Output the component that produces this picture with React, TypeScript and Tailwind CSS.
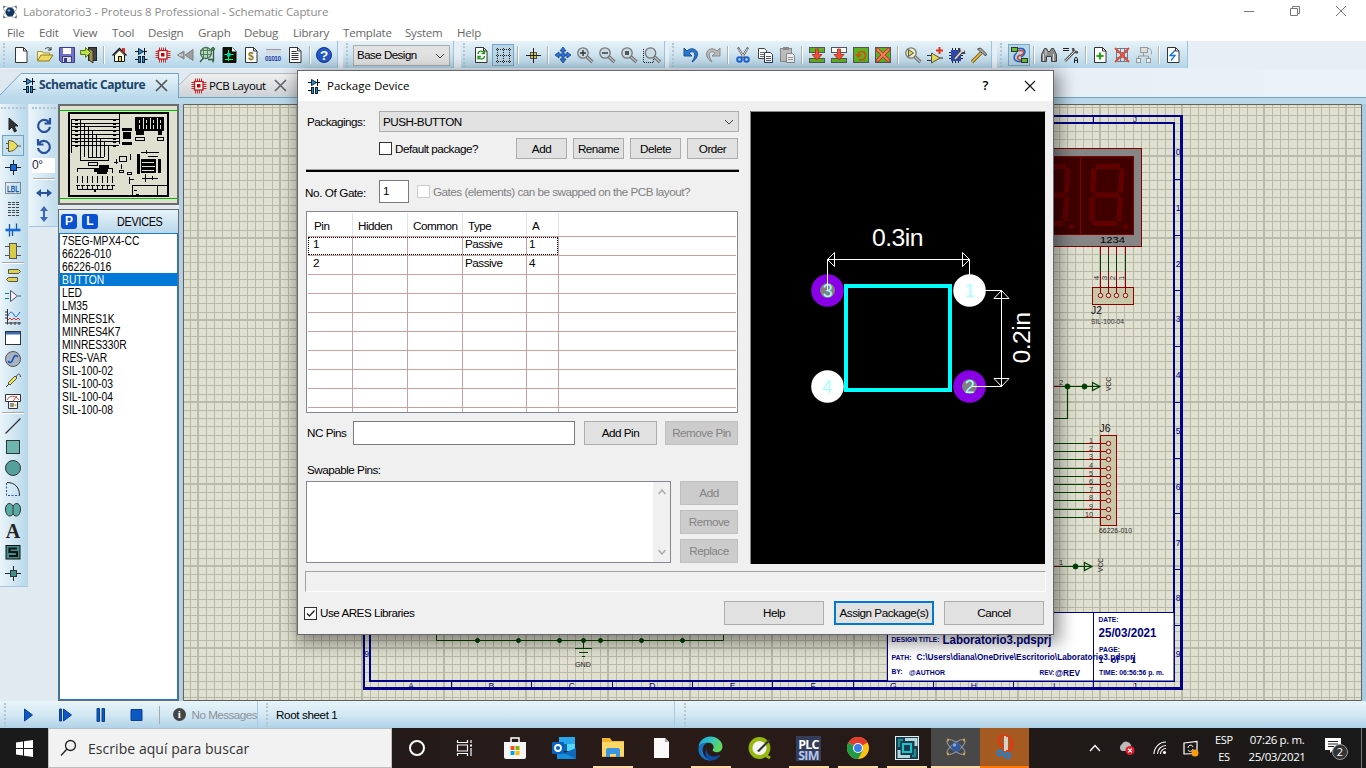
import React from "react";

type Kids = { children?: React.ReactNode };

/* ---------- icon helpers (20 x 20 grid) ---------- */
const Svg = ({ children, s = 20 }: Kids & { s?: number }) => (
  <svg width={s} height={s} viewBox="0 0 20 20" fill="none" className="shrink-0">
    {children}
  </svg>
);

const Page = ({ children }: Kids) => (
  <>
    <path d="M4.500 2.500h8l3.500 3.500v11.500h-11.500z" fill="#fff" stroke="#333" />
    <path d="M12.500 2.500v3.500h3.500" stroke="#333" />
    {children}
  </>
);
const Folder = () => (
  <>
    <path d="M2.500 15.500v-9h5l1 1.500h6v3" fill="#fbf3b5" stroke="#a8902c" />
    <path d="M2.500 16l3.500-6h12l-4 6z" fill="#f0d860" stroke="#8f7a1e" />
    <path d="M10 4c2-2 5-2 6 1m0 0v-3m0 3h-3" stroke="#333" />
  </>
);
const Save = () => (
  <>
    <path d="M2.500 2.500h15v15h-13l-2-2z" fill="#7272cc" stroke="#3c3c8c" />
    <rect x="6" y="3" width="8" height="6" fill="#fff" />
    <rect x="5.500" y="11.500" width="9" height="6" fill="#ddd" stroke="#3c3c8c" />
    <rect x="7" y="13" width="3" height="4" fill="#3c3c8c" />
  </>
);
const Exit = () => (
  <>
    <rect x="9.500" y="2.500" width="8" height="13" fill="#444" stroke="#222" />
    <path d="M10 3l4 3v12l-4-3z" fill="#a89048" stroke="#333" />
    <path d="M1.500 5.500h5v-3l5 5-5 5v-3h-5z" fill="#b9e34a" stroke="#587a14" />
  </>
);
const Home = () => (
  <>
    <path d="M5.500 10v6.500h10V10l-5-5z" fill="#fffde0" stroke="#111" />
    <path d="M3.500 10.500l7-7 7 7" stroke="#111" strokeWidth="1.300" />
    <path d="M13.500 6.500V3.500h2v5" fill="#d33" stroke="#c22" />
    <rect x="9.500" y="11.500" width="3" height="5" fill="#f5d800" stroke="#111" />
  </>
);
const Schem = () => (
  <>
    <path d="M4 6.500h12M13.500 3v7M4 14.500h4M12.500 14.500h4" stroke="#111" />
    <path d="M7.500 3.500l5 3-5 3z" fill="#1f8fe0" stroke="#123" />
    <rect x="7.500" y="11.500" width="2" height="6" fill="#1f8fe0" stroke="#123" />
    <rect x="11.500" y="11.500" width="2" height="6" fill="#1f8fe0" stroke="#123" />
  </>
);
const Chip = () => (
  <>
    <path d="M6.500 2.500v15M8.500 2.500v15M10.500 2.500v15M12.500 2.500v15M2.500 6.500h15M2.500 8.500h15M2.500 10.500h15M2.500 12.500h15" stroke="#c8181c" strokeWidth=".9" />
    <rect x="5.500" y="5.500" width="8.500" height="8.500" fill="#fff" stroke="#c8181c" strokeWidth="1.300" />
    <rect x="8" y="8" width="3.500" height="3.500" fill="#c00" />
  </>
);
const Rewind = () => (
  <>
    <path d="M9 6v8l-6.500-4zM18 4.500v11l-8-5.500z" fill="#a0a0a0" stroke="#808080" />
    <path d="M4 10h4" stroke="#eee" />
  </>
);
const Gerber = () => (
  <>
    <circle cx="9" cy="8" r="5.500" fill="#b9d8b9" stroke="#4b7050" strokeWidth="1.300" />
    <path d="M3 5.500h12M6.500 3v11M10.500 2v12M3 9.500h12" stroke="#4c8060" />
    <path d="M3 17l3.500-4M11 14.500h5v3M16.500 4v12" stroke="#335a3d" strokeWidth="1.300" />
    <circle cx="16" cy="4" r="1.500" fill="#3fa05a" stroke="#335a3d" />
  </>
);
const GreenDoc = () => (
  <>
    <path d="M4 2.500h9l4 4v11H4z" fill="#061206" stroke="#111" />
    <path d="M5.500 9.500h9M6 14.500h8M9.500 5v11" stroke="#0f6" />
    <rect x="8" y="8" width="3.500" height="3.500" fill="#0cc" />
    <path d="M13 2.500l4 4h-4z" fill="#fff" />
  </>
);
const Bom = () => (
  <Page>
    <text x="10" y="15" fontSize="10.500" fontWeight="bold" fill="#8a7a20" textAnchor="middle" fontFamily="Liberation Sans">$</text>
  </Page>
);
const Code = () => (
  <>
    <rect x="3" y="4" width="15" height="5" fill="#d5d9e0" />
    <path d="M3 4.500h15" stroke="#99a" />
    <text x="2" y="15.500" fontSize="6.500" fontWeight="bold" fill="#2a3aa0" fontFamily="Liberation Sans" textLength="16">01010</text>
  </>
);
const Lines = () => (
  <Page>
    <path d="M6.500 6.500h5M6.500 8.500h7M6.500 10.500h7M6.500 12.500h7M6.500 14.500h7" stroke="#333" />
  </Page>
);
const Help = () => (
  <>
    <circle cx="10" cy="10" r="7.500" fill="#2457c5" stroke="#12338f" />
    <text x="10" y="14.800" fontSize="13.500" fontWeight="bold" fill="#fff" textAnchor="middle" fontFamily="Liberation Sans">?</text>
  </>
);
const Refresh = () => (
  <Page>
    <path d="M7 9c0-3 4-4 6-1.500m.5-2v3h-3M13.500 11c0 3-4 4-6 1.500m-.5 2v-3h3" stroke="#1d9a1d" strokeWidth="1.300" />
  </Page>
);
const Dots = () => (
  <g stroke="#222" strokeDasharray="1 1" shapeRendering="crispEdges">
    <path d="M3 4.500h15M3 10.500h15M3 16.500h15M4.500 3v15M10.500 3v15M16.500 3v15" />
  </g>
);
const Origin = () => (
  <>
    <rect x="7.500" y="7.500" width="6" height="6" fill="#d8cc3c" stroke="#555" />
    <path d="M10.500 3v15M3 10.500h15" stroke="#222" />
  </>
);
const Move = () => (
  <path d="M10 2l3 4h-2v3h3V7l4 3-4 3v-2h-3v3h2l-3 4-3-4h2v-3H6v2l-4-3 4-3v2h3V6H7z" fill="#2a78dc" stroke="#173f85" strokeWidth=".8" />
);
const Mag = ({ children, y = false }: Kids & { y?: boolean }) => (
  <>
    <path d="M11 11l6.500 6" stroke="#666" strokeWidth="3.200" />
    <path d="M11.500 11.500l6 5.500" stroke="#c5c5c5" strokeWidth="1.500" />
    <circle cx="8" cy="8" r="5.200" fill={y ? "#eef0c8" : "#c9dbe4"} stroke="#777" strokeWidth="1.300" />
    {children}
  </>
);
const Undo = ({ g = false }: { g?: boolean }) => (
  <g transform={g ? "translate(20 0) scale(-1 1)" : undefined}>
    <path d="M3 3v8h8L8 8.200c3-3 7-1 5.500 3.800-.5 1.500-1.500 3-2.500 5 5-3 7-8 4.500-11C13 3 9 3 6 6z" fill={g ? "#b9b9b9" : "#2a78d2"} stroke={g ? "#8b8b8b" : "#1b4f96"} />
  </g>
);
const Cut = () => (
  <>
    <path d="M5 2.500l6 10M15 2.500L9 12.500" stroke="#555" strokeWidth="2.200" />
    <path d="M5.500 3.500l5 8M14.500 3.500l-5 8" stroke="#e5e5e5" />
    <circle cx="6.500" cy="14.500" r="2.300" stroke="#1c62d0" strokeWidth="2" />
    <circle cx="13.500" cy="14.500" r="2.300" stroke="#1c62d0" strokeWidth="2" />
  </>
);
const Copy = () => (
  <>
    <path d="M3.500 3.500h6l2 2v8h-8z" fill="#fff" stroke="#444" />
    <path d="M5 7.500h4M5 9.500h4M5 11.500h4" stroke="#668" />
    <path d="M9.500 7.500h6l2 2v8h-8z" fill="#fff" stroke="#2c3960" />
    <path d="M11 11.500h5M11 13.500h5M11 15.500h5" stroke="#557" />
  </>
);
const Paste = () => (
  <>
    <rect x="3.500" y="3.500" width="11" height="13" fill="#bdbdbd" stroke="#888" />
    <rect x="6" y="2" width="6" height="3" fill="#888" />
    <path d="M9.500 8.500h6l2 2v7h-8z" fill="#eee" stroke="#888" />
    <path d="M11 12.500h5M11 14.500h5" stroke="#999" />
  </>
);
const BlkA = ({ top = true }: { top?: boolean }) => (
  <>
    <rect x="2.500" y="2.500" width="15" height="5" fill={top ? "#5cb51e" : "#fff"} stroke="#555" />
    <rect x="2.500" y="13.500" width="15" height="4" fill="#5cb51e" stroke="#555" />
    <path d="M8.500 4h3v5.500H15L10 15l-5-5.500h3.500z" fill="#f0503c" stroke="#b82818" strokeWidth=".8" />
  </>
);
const BlkRot = () => (
  <>
    <rect x="2.500" y="2.500" width="15" height="15" fill="#5cb51e" stroke="#555" />
    <path d="M8 14.500c4 1.500 6.500-1 6.500-4.500s-5-5-7.500-1.500" stroke="#d84a20" strokeWidth="1.600" />
    <path d="M4 9h7l-3.500 4z" fill="#d84a20" />
  </>
);
const BlkDel = () => (
  <>
    <rect x="2.500" y="2.500" width="15" height="15" fill="#5cb51e" stroke="#555" />
    <path d="M3.500 3.500l13 13M16.500 3.500l-13 13" stroke="#b5301c" strokeWidth="3.600" />
    <path d="M4 4l12 12M16 4L4 16" stroke="#f77c60" strokeWidth="2.200" />
  </>
);
const GatePlus = () => (
  <>
    <path d="M2 10.500h4M2 15.500h4M14 13h4" stroke="#333" />
    <path d="M6.500 8l8.500 5-8.500 5z" fill="#e6da4c" stroke="#555" />
    <path d="M14.500 2v7M11 5.500h7" stroke="#e0341c" strokeWidth="2" />
  </>
);
const ChipTool = () => (
  <>
    <path d="M5.500 3v15M8.500 3v15M11.500 3v15M2 7.500h14M2 10.500h14M2 13.500h14" stroke="#223" />
    <rect x="4" y="5" width="10" height="11" fill="#2c46b0" />
    <path d="M8 14l7-8M13 3c0 3 2 5 5 4" stroke="#444" strokeWidth="3.500" />
    <path d="M8 14l7-8M14 3c0 2 1 3 3 3" stroke="#ddd" strokeWidth="1.800" />
  </>
);
const Hammer = () => (
  <>
    <path d="M3 17l9-9" stroke="#7a5a10" strokeWidth="3.200" />
    <path d="M3 17l9-9" stroke="#f1c440" strokeWidth="1.600" />
    <path d="M8.500 4l3-1 6 6-1 2-3-3-2-1z" fill="#aaa" stroke="#444" />
  </>
);
const Route = () => (
  <>
    <path d="M9 5.500h3c4 0 3 4 0 4.500-4 .5-5 4.500-1 5h2" stroke="#d0402a" strokeWidth="1.500" />
    <path d="M9 3.500h4c4 1 4 6-1 8.500M8 7.500c-4 3-4 8 1 9h3" stroke="#205ec0" strokeWidth="1.500" />
    <rect x="2.500" y="2.500" width="6" height="4" fill="#62c428" stroke="#333" />
    <rect x="12.500" y="13.500" width="6" height="4" fill="#62c428" stroke="#333" />
  </>
);
const Binoc = () => (
  <>
    <path d="M2.500 16.500v-7l3-6h2l1.500 3h2l1.500-3h2l3 6v7h-5v-5h-5v5z" fill="#8b8b8b" stroke="#444" />
    <path d="M4.500 9v7M14.500 9v7M7 5v5" stroke="#ddd" />
  </>
);
const PropTool = () => (
  <>
    <path d="M2 3.500h6M2 5.500h6" stroke="#222" />
    <path d="M4 16L14 6M12 3c0 3 2 5 5 4" stroke="#555" strokeWidth="2.500" />
    <path d="M4 16L14 6" stroke="#ddd" />
    <path d="M13.500 18v-4l1.500-2 1.500 2v4M13.500 15.500h3" stroke="#222" />
  </>
);
const PagePlus = () => (
  <Page>
    <path d="M10 7.500v7M6.500 11h7" stroke="#2ba014" strokeWidth="2.200" />
  </Page>
);
const PageDel = () => (
  <>
    <path d="M4.500 3.500h11v13h-11zM5 7.500h10M5 12.500h10M8.500 4v12M12.500 4v12" stroke="#778" />
    <path d="M3 3l14 14M17 3L3 17" stroke="#e04c30" strokeWidth="1.800" />
  </>
);
const Tree = () => (
  <>
    <rect x="6.500" y="2.500" width="7" height="5" fill="#ddd" stroke="#999" />
    <path d="M9.500 8v3M4.500 13v-2h10v2M14 3.500c4 0 4 4 3 6" stroke="#999" />
    <rect x="2.500" y="13.500" width="4" height="4" fill="#eee" stroke="#999" />
    <rect x="12.500" y="13.500" width="4" height="4" fill="#eee" stroke="#999" />
  </>
);
const Bolt = () => (
  <Page>
    <path d="M12 5.500l-5 5h5l-4 5" stroke="#0a78e0" strokeWidth="1.300" />
  </Page>
);

/* ---------- toolbar ---------- */
const Tb = ({ children, on = false }: Kids & { on?: boolean }) => (
  <div className={on ? "flex h-[22px] w-[22px] items-center justify-center border border-[#7aa7c4] bg-[#b9d6e6]" : "flex h-[22px] w-[22px] items-center justify-center"}>
    <Svg>{children}</Svg>
  </div>
);
const Sep = ({ w = "w-2" }: { w?: string }) => (
  <div className={"flex h-[18px] justify-center " + w}>
    <div className="h-full w-px bg-[#b3b3b3]" />
    <div className="h-full w-px bg-white" />
  </div>
);
const Grip = () => <div className="h-[24px] border-l-2 border-dotted border-[#b6c6d0]" />;
const Group = ({ children, cls }: Kids & { cls: string }) => (
  <div className={"flex h-[27px] items-center border-r border-[#9cc4da] bg-gradient-to-b from-[#e6f2f9] via-[#cfe4f0] to-[#b3d5e8] " + cls}>{children}</div>
);

const Toolbar = () => (
  <div className="flex h-[28px] items-start bg-[#e7eef5]">
    <Group cls="w-[338px] pl-[3px]">
      <Grip />
      <div className="w-[5px]" />
      <Tb><Page /></Tb>
      <div className="w-[2px]" />
      <Tb><Folder /></Tb>
      <Tb><Save /></Tb>
      <Tb><Exit /></Tb>
      <Sep />
      <Tb><Home /></Tb>
      <Tb><Schem /></Tb>
      <Tb><Chip /></Tb>
      <Tb><Rewind /></Tb>
      <Tb><Gerber /></Tb>
      <Tb><GreenDoc /></Tb>
      <Tb><Bom /></Tb>
      <Tb><Code /></Tb>
      <Tb><Lines /></Tb>
      <Sep w="w-[7px]" />
      <Tb><Help /></Tb>
    </Group>
    <Group cls="ml-[5px] w-[111px] pl-[3px]">
      <Grip />
      <div className="mt-[2px] ml-[5px] flex h-[21px] w-[97px] shrink-0 items-center justify-between border border-[#adadad] bg-[#e2e2e2] pr-1 pl-[3px]">
        <span className="text-[11.500px] tracking-[-0.5px]">Base Design</span>
        <svg width="10" height="6" fill="none"><path d="M1 1l4 4 4-4" stroke="#444" /></svg>
      </div>
    </Group>
    <Group cls="ml-[7px] w-[204px] pl-[2px]">
      <Grip />
      <div className="w-[5px]" />
      <Tb><Refresh /></Tb>
      <Tb on><Dots /></Tb>
      <Sep />
      <Tb><Origin /></Tb>
      <Sep />
      <Tb><Move /></Tb>
      <Tb><Mag><path d="M5 8h6M8 5v6" stroke="#333" strokeWidth="1.400" /></Mag></Tb>
      <Tb><Mag><path d="M5 8h6" stroke="#333" strokeWidth="1.400" /></Mag></Tb>
      <Tb><Mag><rect x="6" y="6" width="4" height="4" fill="#555" /></Mag></Tb>
      <Tb><path d="M2.500 4v13.500h10V12" stroke="#222" strokeDasharray="1 1" /><g transform="translate(1.500 0)"><Mag /></g></Tb>
    </Group>
    <Group cls="ml-[4px] w-[323px] pl-[3px]">
      <Grip />
      <div className="w-[6px]" />
      <Tb><Undo /></Tb>
      <Tb><Undo g /></Tb>
      <Sep />
      <Tb><Cut /></Tb>
      <Tb><Copy /></Tb>
      <Tb><Paste /></Tb>
      <Sep />
      <Tb><BlkA /></Tb>
      <Tb><BlkA top={false} /></Tb>
      <Tb><BlkRot /></Tb>
      <Tb><BlkDel /></Tb>
      <Sep />
      <Tb><Mag y><path d="M5.500 4.500l5 3.500-5 3.500z" fill="#e3d84a" stroke="#555" /></Mag></Tb>
      <Tb><GatePlus /></Tb>
      <Tb><ChipTool /></Tb>
      <Tb><Hammer /></Tb>
    </Group>
    <Group cls="ml-[5px] w-[191px] pl-[3px]">
      <Grip />
      <div className="w-[6px]" />
      <Tb on><Route /></Tb>
      <Sep />
      <Tb><Binoc /></Tb>
      <Tb><PropTool /></Tb>
      <Sep w="w-[7px]" />
      <Tb><PagePlus /></Tb>
      <Tb><PageDel /></Tb>
      <Tb><Tree /></Tb>
      <Sep w="w-[7px]" />
      <Tb><Bolt /></Tb>
    </Group>
  </div>
);

/* ---------- left mode bar ---------- */
const Lt = ({ children, on = false }: Kids & { on?: boolean }) => (
  <div className={on ? "flex h-[21px] w-[22px] shrink-0 items-center justify-center border border-[#6fa3c3] bg-[#c6dfec]" : "flex h-[21px] w-[22px] shrink-0 items-center justify-center"}>
    <Svg>{children}</Svg>
  </div>
);
const HSep = () => <div className="mt-[1px] h-[2px] w-[22px] shrink-0 border-t border-[#a9a9a9] bg-white" />;

const ModeBar = () => (
  <div className="flex h-[483px] w-[28px] flex-col items-center border-b border-[#a9c7dc] bg-gradient-to-r from-[#eaf4fa] to-[#b7d8ea] pr-[2px]">
    <div className="mt-[3px] mb-[5px] w-[24px] shrink-0 border-t-2 border-dotted border-[#b4c3cd]" />
    <Lt><path d="M6 3v12l3-3 2.500 5 2-1-2.500-5h4z" fill="#333" stroke="#222" /></Lt>
    <Lt on><path d="M3 7.500h3M3 12.500h3M14 10h4" stroke="#555" /><path d="M5.500 4.500c5 0 8 3 9 5.500-1 2.500-4 5.500-9 5.500z" fill="#e9dc5a" stroke="#555" /></Lt>
    <Lt><path d="M2 10.500h16M10.500 3v15" stroke="#222" /><rect x="7.500" y="7.500" width="6" height="6" fill="#1468d8" stroke="#124" /></Lt>
    <Lt><rect x="2.500" y="4.500" width="15" height="11" stroke="#333" strokeDasharray="1 1" /><text x="10" y="13.500" fontSize="9.500" fill="#0a4dad" stroke="#0a4dad" strokeWidth=".3" textAnchor="middle" textLength="12" lengthAdjust="spacingAndGlyphs" fontFamily="Liberation Sans">LBL</text></Lt>
    <Lt><path d="M5 3.500h11M5 5.500h11M5 8.500h11M5 11.500h11M5 13.500h11M5 16.500h11" stroke="#444" strokeDasharray="3 1" /></Lt>
    <Lt><path d="M6.500 10v6.500M13.500 3.500v6M9.500 10v6M6.500 4v6" stroke="#17569c" strokeWidth="1.300" /><path d="M2.500 10h15" stroke="#1468d8" strokeWidth="2.600" /></Lt>
    <Lt><path d="M2 5.500h4M2 14.500h4M14 5.500h4M14 14.500h4" stroke="#555" /><rect x="6.500" y="2.500" width="7" height="15" fill="#d8cc48" stroke="#555" /></Lt>
    <HSep />
    <Lt><path d="M5.500 4.500h10l2 2-2 2h-10zM14.500 12.500h-9l-2 2 2 2h9z" fill="#e0d34a" stroke="#555" /></Lt>
    <Lt><path d="M2 7.500h4M2 12.500h4M15 10h3" stroke="#067f7f" /><path d="M7.500 4.500l7 5.500-7 5.500z" fill="#eef" stroke="#555" /></Lt>
    <Lt><path d="M4.500 2v15.500M2 16h16M2 5h3M2 8h3M2 11h3M8 15v3M12 15v3M16 15v3" stroke="#333" /><path d="M5 9c2-5 4-5 6-1s4 0 6-3" stroke="#1468d8" /><path d="M5 13l2-2 2 2 2-2 2 2 2-2 2 2" stroke="#c33" /></Lt>
    <Lt><rect x="2.500" y="3.500" width="15" height="13" fill="#fff" stroke="#333" /><rect x="3" y="4" width="14" height="2.500" fill="#3c6cb4" /></Lt>
    <Lt><circle cx="10" cy="10" r="7.500" fill="#aab3c2" stroke="#555" /><path d="M5 12c2 3 4 1 5-2s3-5 5-2" stroke="#1453b8" strokeWidth="1.500" /></Lt>
    <Lt><path d="M3 17l3-3M13 7c2-4 4-4 4.500 0" stroke="#444" /><path d="M5 13l7-7 2 2-7 7z" fill="#f1e84a" stroke="#555" /></Lt>
    <Lt><path d="M2.500 3.500h15v7h-15z" fill="#fff" stroke="#333" /><path d="M4 9c2-5 9-5 12 0M10 10l4-5" stroke="#c44" /><path d="M5.500 10.500h9v7h-9z" fill="#f4f4f4" stroke="#333" /><path d="M7 13h4M7 15h4" stroke="#333" /><circle cx="12.500" cy="14" r="1" fill="#db0" /></Lt>
    <HSep />
    <div className="h-px shrink-0" />
    <Lt><path d="M2.500 17.500l15-15" stroke="#333" strokeWidth="1.300" /></Lt>
    <Lt><rect x="3.500" y="3.500" width="13" height="13" fill="#6db5af" stroke="#333" /></Lt>
    <Lt><circle cx="10" cy="10" r="7.500" fill="#55a09b" stroke="#333" /></Lt>
    <Lt><path d="M3.500 4v12.500h13" stroke="#1453b8" strokeDasharray="2 1.500" /><path d="M4 3.500c8 0 12.500 5 12.500 13" stroke="#222" /></Lt>
    <Lt><path d="M10 6c3-5 8-2 7.500 4s-5 8-7.500 4c-2.500 4-7 2-7.500-4S7 1 10 6z" fill="#5aaaa4" stroke="#333" /><path d="M10 6v8" stroke="#333" /></Lt>
    <Lt><text x="10" y="17" fontSize="20" fontWeight="bold" fill="#222" textAnchor="middle" fontFamily="Liberation Serif">A</text></Lt>
    <Lt><rect x="3" y="3.500" width="14" height="13.500" fill="#3f8f8b" stroke="#111" /><path d="M14 6.500H6.500v3.500H14v4H6" stroke="#111" strokeWidth="2.200" /></Lt>
    <Lt><path d="M2 10.500h16M10.500 3v15" stroke="#222" /><rect x="7.500" y="7.500" width="6" height="6" fill="#3f8f8b" stroke="#333" /></Lt>
  </div>
);

const RotPath = () => <path d="M15 7.500A6 6 0 1 0 16 12M16 3v5.500h-5.500" stroke="#27509c" strokeWidth="2.200" />;
const RotateBar = () => (
  <div className="flex w-[29px] flex-col items-center">
    <div className="flex h-[123px] w-full flex-col items-center border-b border-[#a9c7dc] bg-gradient-to-r from-[#eaf4fa] to-[#c0dcec]">
      <div className="mt-[3px] mb-[5px] w-[24px] shrink-0 border-t-2 border-dotted border-[#b4c3cd]" />
      <Lt><RotPath /></Lt>
      <Lt><g transform="translate(20 0) scale(-1 1)"><RotPath /></g></Lt>
      <div className="mt-[2px] h-[15px] w-[23px] shrink-0 bg-white text-[12px] leading-[14px] tracking-[-0.5px] text-[#224]">0°</div>
      <div className="mt-[5px] mb-[2px] h-[2px] w-[22px] shrink-0 border-t border-[#a9a9a9] bg-white" />
      <Lt><path d="M2 10l5-4v3h6V6l5 4-5 4v-3H7v3z" fill="#27509c" /></Lt>
      <Lt><path d="M10 2l4 5h-3v6h3l-4 5-4-5h3V7H6z" fill="#3c66b8" /></Lt>
    </div>
  </div>
);

/* ---------- overview + device list ---------- */
const seq = (n: number) => Array.from({ length: n }, (_, i) => i);

const Overview = () => (
  <svg width="121" height="101" viewBox="58 104 121 101" shapeRendering="crispEdges" fill="none" className="shrink-0">
    <rect x="59" y="105" width="119" height="99" fill="#e0e0d0" stroke="#6b6b6b" strokeWidth="2" />
    <path d="M59 110.500h119M59 198.500h119" stroke="#00b800" />
    <rect x="69" y="113" width="99" height="83" stroke="#000" strokeWidth="2" />
    {seq(8).map((i) => (
      <path key={i} d={`M72 ${119.500 + i * 3.700}h47M${80.500 + i * 4} ${120 + (7 - Math.abs(i * 2 - 7)) * 0 + i * 3.700}V${i < 1 || i > 6 ? 160 : 157}`} stroke="#000" />
    ))}
    {seq(8).map((i) => (
      <path key={i} d={`M75 ${120 + i * 3.700}h3M113 ${120 + i * 3.700}h3`} stroke="#000" strokeWidth="2" />
    ))}
    <path d="M119.500 114v30M71.500 119v34M80 160h29M88 157h16" stroke="#000" />
    <rect x="123" y="132" width="8" height="7" fill="#000" />
    <path d="M122 129h10M122 143h10" stroke="#000" strokeWidth="3" />
    <rect x="135" y="117" width="29" height="14" fill="#000" />
    {seq(4).map((i) => (
      <path key={i} d={`M${139 + i * 7} 120v3M${139 + i * 7} 125v4M${143 + i * 7} 118v11`} stroke="#e0e0d0" />
    ))}
    <path d="M136 131h8v4h-8zM158 131h4v4h-4z" fill="#000" />
    <path d="M135.500 137.500h9v3h-9zM157.500 137.500h6v3h-6zM88.500 162.500h9v3h-9zM119.500 156.500h7v5h-7zM119.500 170.500h4v2h-4zM127.500 172.500h4v2h-4z" stroke="#000" />
    <path d="M99 166h10M94 170h14M97 172h10" stroke="#000" strokeWidth="3" />
    <path d="M77.500 172v-3.500h35v4" stroke="#000" />
    {seq(8).map((i) => (
      <path key={i} d={`M${77.500 + i * 5} 176v7M${76 + i * 5} 185.500h4M${77.500 + i * 5} 185v4`} stroke="#000" />
    ))}
    <path d="M77 189.500h36M95 189v3" stroke="#000" strokeWidth="1.500" />
    <rect x="141" y="159" width="15" height="14" fill="#000" />
    <path d="M142 162.500h12M142 166.500h13M142 170.500h12" stroke="#e0e0d0" />
    <rect x="137" y="154" width="3" height="20" fill="#000" />
    <rect x="158" y="159" width="3" height="14" fill="#000" />
    <path d="M141 152.500h18M146.500 150v4M148 156h10M145.500 174v8M142 178.500h16M152 176v4M129 177v7M129 179.500h5M121 164v5M130.500 154v6M114 162h4M116 159v5" stroke="#000" />
    <path d="M132.500 196v-10.500h35M157.500 186v9M134 190h3M136 194h3" stroke="#000" />
  </svg>
);

const devices = ["7SEG-MPX4-CC", "66226-010", "66226-016", "BUTTON", "LED", "LM35", "MINRES1K", "MINRES4K7", "MINRES330R", "RES-VAR", "SIL-100-02", "SIL-100-03", "SIL-100-04", "SIL-100-08"];

const DevicePanel = () => (
  <div className="flex w-[121px] flex-col">
    <Overview />
    <div className="mt-[4px] flex h-[493px] flex-col border border-[#6b6b6b]">
      <div className="flex h-[23px] items-center bg-gradient-to-b from-[#e6f2f9] to-[#b9d8ea] pl-[2px]">
        <div className="h-[15px] w-[16px] rounded-[3px] bg-[#0a50d2] text-center text-[12px] leading-[15px] font-bold text-white">P</div>
        <div className="ml-[5px] h-[15px] w-[16px] rounded-[3px] bg-[#0a50d2] text-center text-[12px] leading-[15px] font-bold text-white">L</div>
        <span className="ml-[19px] origin-left scale-x-[.9] text-[12px] tracking-[-0.3px]">DEVICES</span>
      </div>
      <div className="flex-1 border border-[#1c78c8] bg-white">
        {devices.map((d) => (
          <div key={d} className={d === "BUTTON" ? "h-[13px] bg-[#0078d7] pl-[2px] text-[12.500px] leading-[15px] text-white" : "h-[13px] pl-[2px] text-[12.500px] leading-[15px]"}>
            <span className="inline-block origin-left scale-x-[.825]">{d}</span>
          </div>
        ))}
      </div>
    </div>
  </div>
);

/* ---------- schematic canvas ---------- */
const Digit = ({ x }: { x: number }) => (
  <g transform={`translate(${x} 164)`} stroke="#620000" strokeWidth="5">
    <path d="M7 2.500h24M6 31h24M4 59.500h24" />
    <path d="M33 4.500l-1.500 24M31.500 33L30 57M5 4.500L3.500 28.500M3 33v24" />
  </g>
);
const T = ({ x, y, s, c = "#000080", a = "start", w, b = false, r, children }: Kids & { x: number; y: number; s: number; c?: string; a?: "start" | "middle" | "end"; w?: number; b?: boolean; r?: boolean }) => (
  <text x={x} y={y} fontSize={s} fill={c} textAnchor={a} textLength={w} lengthAdjust="spacingAndGlyphs" fontWeight={b ? "bold" : "normal"} transform={r ? `rotate(-90 ${x} ${y})` : undefined} fontFamily="Liberation Sans, sans-serif">{children}</text>
);

const j6 = [443.5, 451.5, 459.5, 468.5, 476.5, 484.5, 492.5, 500.5, 509.5, 517.5];

const Canvas = () => (
  <svg width="1179" height="597" viewBox="183 104 1179 597" fill="none" className="shrink-0">
    <rect x="183" y="104" width="1179" height="597" fill="#e0e0d0" />
    <g shapeRendering="crispEdges" fill="#b9b9aa">
      {seq(143).map((i) => {
        const bold = i % 10 === 1;
        return <rect key={i} x={Math.round(189.5 + i * 8.2) - (bold ? 1 : 0)} y="105" width={bold ? 2 : 1} height="595" />;
      })}
      {seq(73).map((i) => {
        const bold = i % 10 === 6;
        return <rect key={i} x="184" y={Math.round(106.6 + i * 8.2) - (bold ? 1 : 0)} width="1177" height={bold ? 2 : 1} />;
      })}
    </g>
    <path d="M183.500 700.500v-596h1178v596z" stroke="#606060" />
    <g shapeRendering="crispEdges" stroke="#000088">
      <path d="M363.500 116v572.500h817.500V116z" strokeWidth="2" />
      <path d="M370 123v558h804V123z" strokeWidth="2" />
      <path d="M1181.500 115v574M363 688.500h820" strokeWidth="3" />
      {seq(9).map((i) => <path key={i} d={`M1175 ${179.500 + i * 55.700}h6M364 ${179.500 + i * 55.700}h6M${451.500 + i * 80.300} 682v6M${451.500 + i * 80.300} 116v6`} />)}
    </g>
    {seq(10).map((i) => (
      <g key={i}>
        <T x={1178} y={155 + i * 55.800} s={8.500} a="middle">{i}</T>
        <T x={411 + i * 80.400} y={689} s={8.500} a="middle">{"ABCDEFGHIJ"[i]}</T>
      </g>
    ))}
    <T x={366.500} y={657} s={8.500} a="middle">9</T>
    <T x={1135} y={122} s={8} a="middle">J</T>
    <g>
      <rect x="1000.500" y="148.500" width="141" height="98" fill="#868686" stroke="#800000" />
      <rect x="1000.500" y="156.500" width="133" height="78" fill="#400000" stroke="#800000" />
      <path d="M1080.500 157v77" stroke="#800000" />
      <Digit x={1035} />
      <Digit x={1089} />
      <circle cx="1071.500" cy="226.500" r="2.500" fill="#620000" />
      <circle cx="1125.500" cy="226.500" r="2.500" fill="#620000" />
      <T x={1100} y={243} s={8.500} c="#000" w={25}>1234</T>
    </g>
    {[1100.5, 1108.5, 1116.5, 1125.5].map((x, i) => (
      <g key={x}>
        <path d={`M${x} 247v8M${x} 271v22`} stroke="#900000" />
        <path d={`M${x} 255v16`} stroke="#004000" />
        <T x={x - 1.5} y={280} s={7.500} c="#333" r>{4 - i}</T>
      </g>
    ))}
    <rect x="1092.500" y="287.500" width="41" height="17" fill="#c8c8a8" stroke="#900000" />
    {[1100.5, 1108.5, 1116.5, 1125.5].map((x) => <g key={x}><path d={`M${x} 287v6`} stroke="#900000" /><circle cx={x} cy="295.500" r="2.200" fill="#e0e0d0" stroke="#900000" /></g>)}
    <T x={1091} y={314} s={10} c="#111" w={11}>J2</T>
    <T x={1091} y={324} s={6.500} c="#333" w={33}>SIL-100-04</T>
    <g stroke="#004000">
      <path d="M1053 386.500h7M1053 566.500h6" stroke="#900000" />
      <path d="M1060 386.500h40M1067.500 386.500v32h-15M1059 566.500h33M1092.500 382.500l7.500 4-7.500 4zM1084.500 562.500l7.500 4-7.500 4z" strokeWidth="1.200" />
      <circle cx="1067.500" cy="386.500" r="2.500" fill="#004000" />
      <circle cx="1084.500" cy="386.500" r="2.500" fill="#004000" />
      <circle cx="1075.500" cy="566.500" r="2.500" fill="#004000" />
    </g>
    <T x={1059} y={385} s={7.500} c="#333">2</T>
    <T x={1059} y={565} s={7.500} c="#333">1</T>
    <T x={1111} y={391} s={7.500} c="#222" w={14} r>VCC</T>
    <T x={1103} y={572} s={7.500} c="#222" w={14} r>VCC</T>
    <rect x="1100.500" y="435.500" width="16" height="90" fill="#c8c8a8" stroke="#900000" />
    {j6.map((y, i) => (
      <g key={y}>
        <path d={`M1050 ${y}h35`} stroke="#004000" />
        <path d={`M1085 ${y}h21`} stroke="#900000" />
        <circle cx="1108.500" cy={y} r="2.200" fill="#e0e0d0" stroke="#900000" />
        <T x={1093} y={y - 1} s={7.200} c="#333" a="end">{i + 1}</T>
      </g>
    ))}
    <T x={1099.500} y={432} s={10} c="#111" w={11}>J6</T>
    <T x={1099} y={533} s={7} c="#222" w={33}>66226-010</T>
    <g stroke="#004000">
      <path d="M436.500 600v40.500h287V600M583.500 640v8M575 648.500h17M579 652.500h9M582 656.500h3" />
      {[477.5, 518.5, 559.5, 583.5, 600.5, 641.5, 682.5].map((x) => <circle key={x} cx={x} cy="640.500" r="2" fill="#004000" />)}
    </g>
    <T x={575} y={667} s={7} c="#222" w={16}>GND</T>
    <path d="M887.500 612.500h286.500v68.500h-286.500zM1093.500 613v68" fill="#fff" stroke="#000080" />
    <T x={891.500} y={642} s={7} b w={48}>DESIGN TITLE:</T>
    <T x={942.500} y={644} s={12} b w={109}>Laboratorio3.pdsprj</T>
    <T x={891.500} y={659.500} s={7} b w={20}>PATH:</T>
    <T x={916.500} y={660} s={8.500} b w={219}>C:\Users\diana\OneDrive\Escritorio\Laboratorio3.pdsprj</T>
    <T x={891.500} y={674} s={7} b w={11}>BY:</T>
    <T x={909} y={674.500} s={7.500} b w={36}>@AUTHOR</T>
    <T x={1039.500} y={675} s={7} b w={15}>REV:</T>
    <T x={1055} y={676} s={8.500} b w={25}>@REV</T>
    <T x={1098.500} y={622} s={7} b w={20}>DATE:</T>
    <T x={1098.500} y={636.500} s={12} b w={58}>25/03/2021</T>
    <T x={1099} y={652} s={7} b w={21}>PAGE:</T>
    <T x={1098.500} y={662.500} s={8.500} b>1</T>
    <T x={1111} y={662.500} s={8.500} b>of</T>
    <T x={1131} y={662.500} s={8.500} b>1</T>
    <T x={1099} y={675} s={7} b w={65}>TIME: 06:56:56 p. m.</T>
  </svg>
);

/* ---------- dialog ---------- */
const Btn = ({ children, cls, off = false, focus = false }: Kids & { cls: string; off?: boolean; focus?: boolean }) => (
  <div className={"flex shrink-0 items-center justify-center " + cls + (off ? " border border-[#bfbfbf] bg-[#cccccc] text-[#838383]" : focus ? " border-2 border-[#0078d7] bg-[#e1e1e1]" : " border border-[#adadad] bg-[#e1e1e1]")}>{children}</div>
);
const Check = ({ off = false, on = false }: { off?: boolean; on?: boolean }) => (
  <div className={off ? "h-[13px] w-[13px] shrink-0 border border-[#cccccc] bg-white" : "h-[13px] w-[13px] shrink-0 border border-[#333] bg-white"}>
    {on && <svg width="11" height="11" fill="none"><path d="M2 5.500l2.500 2.500L9.500 2.500" stroke="#222" strokeWidth="1.300" /></svg>}
  </div>
);

const cols = ["w-[45px]", "w-[55px]", "w-[55px]", "w-[64px]", "w-[32px]"];
const heads = ["Pin", "Hidden", "Common", "Type", "A"];
const rows = [["1", "", "", "Passive", "1"], ["2", "", "", "Passive", "4"], [], [], [], [], [], [], []];

const PinTable = () => (
  <div className="relative mt-[8px] flex h-[202px] w-[432px] flex-col overflow-hidden border border-[#828790] bg-white px-[1px]">
    <div className="flex h-[24px] shrink-0">
      {heads.map((h, i) => (
        <div key={h} className={cols[i] + " mt-[1px] border-r border-[#e2e2e2] leading-[25px] " + (i === 0 ? "pl-[6px]" : "pl-[5px]")}>{h}</div>
      ))}
    </div>
    {rows.map((r, i) => (
      <div key={i} className="flex h-[19px] shrink-0 border-t border-[#cf9fa0]">
        {cols.map((c, k) => (
          <div key={c + k} className={c + " shrink-0 border-r border-[#cf9fa0] leading-[14px] " + (k === 0 ? "pl-[5px]" : "pl-[2px]")}>{r[k]}</div>
        ))}
      </div>
    ))}
    <div className="flex h-[6px] shrink-0 border-t border-[#cf9fa0]">
      {cols.map((c, k) => <div key={k} className={c + " h-[4px] shrink-0 border-r border-[#cf9fa0]"} />)}
    </div>
    <div className="absolute top-[25px] left-[1px] h-[18px] w-[250px] border border-dotted border-black" />
  </div>
);

const Preview = () => (
  <svg width="296" height="454" viewBox="750 111 296 454" fill="none" className="mt-[10px] shrink-0">
    <rect x="750" y="111" width="295" height="453" fill="#000" />
    <path d="M750.500 564v-452.500h295" stroke="#888" />
    <rect x="846" y="286" width="104" height="104" stroke="#00ffff" strokeWidth="4" />
    <circle cx="827.500" cy="290.500" r="16.300" fill="#8a00e6" />
    <circle cx="969.500" cy="386.500" r="16.300" fill="#8a00e6" />
    <circle cx="969.500" cy="290.500" r="16.300" fill="#fff" />
    <circle cx="827.500" cy="386.500" r="16.300" fill="#fff" />
    <circle cx="827.500" cy="290.500" r="7.500" fill="#808080" />
    <circle cx="969.500" cy="386.500" r="7.500" fill="#808080" />
    <T x={827.500} y={297} s={18} c="#a6ffff" a="middle">3</T>
    <T x={969.500} y={297} s={18} c="#a6ffff" a="middle">1</T>
    <T x={827} y={393} s={18} c="#a6ffff" a="middle">4</T>
    <T x={969.500} y={393} s={18} c="#a6ffff" a="middle">2</T>
    <g stroke="#fff" shapeRendering="crispEdges">
      <path d="M827.500 290v-30.500h142v16M985 290.500h16.500v96h-30" />
    </g>
    <path d="M827.500 259.500l7-7v14zM969.500 259.500l-7-7v14zM1001.500 290.500l-7.500 8h15zM1001.500 386.500l-7.500-8h15z" stroke="#fff" />
    <T x={872} y={246} s={23} c="#fff" w={51}>0.3in</T>
    <T x={1030} y={363.500} s={23} c="#fff" w={51} r>0.2in</T>
  </svg>
);

const Dialog = () => (
  <div className="absolute top-[70px] left-[297px] flex h-[565px] w-[757px] flex-col border border-[#666a70] bg-[#f0f0f0] text-[11.700px] tracking-[-0.5px] shadow-[3px_5px_16px_3px_rgba(0,0,0,0.42)]">
    <div className="flex h-[30px] items-center bg-white pl-[6px]">
      <Svg s={20}><Schem /></Svg>
      <span className="ml-[3px] font-['Open_Sans'] text-[11.500px] tracking-[0px]">Package Device</span>
      <span className="ml-auto font-['Open_Sans'] text-[13px] font-semibold">?</span>
      <svg width="12" height="12" fill="none" className="mr-[17px] ml-[36px]"><path d="M1 1l10 10M11 1L1 11" stroke="#111" strokeWidth="1.100" /></svg>
    </div>
    <div className="flex h-[463px] gap-[11px] pl-[8px]">
      <div className="w-[433px] shrink-0 pt-[10px]">
        <div className="flex h-[21px] items-center">
          <span className="w-[73px] pl-[1px]">Packagings:</span>
          <div className="flex h-[21px] flex-1 items-center justify-between border border-[#adadad] bg-[#e1e1e1] pr-[4px] pl-[3px]">
            PUSH-BUTTON
            <svg width="10" height="6" fill="none"><path d="M1 1l4 4 4-4" stroke="#444" /></svg>
          </div>
        </div>
        <div className="mt-[6px] flex h-[21px] items-center pl-[73px]">
          <Check />
          <span className="w-[121px] pl-[3px]">Default package?</span>
          <div className="ml-[3px] flex gap-[6px]">
            {["Add", "Rename", "Delete", "Order"].map((b) => <Btn key={b} cls="h-[21px] w-[51px]">{b}</Btn>)}
          </div>
        </div>
        <div className="mt-[10px] h-[3px] border-t border-[#a0a0a0] bg-black" />
        <div className="mt-[8px] flex h-[23px] items-center">
          <span className="ml-[-1px] w-[62px] pt-[3px] tracking-[-0.4px] whitespace-nowrap">No. Of Gate:</span>
          <div className="ml-[12px] h-[23px] w-[30px] border border-[#7a7a7a] bg-white pl-[3px] leading-[19px]">1</div>
          <div className="ml-[8px]"><Check off /></div>
          <span className="pl-[3px] whitespace-nowrap text-[#808080]">Gates (elements) can be swapped on the PCB layout?</span>
        </div>
        <PinTable />
        <div className="mt-[8px] flex h-[24px] items-center">
          <span className="w-[47px] pl-[1px] whitespace-nowrap">NC Pins</span>
          <div className="h-[24px] w-[222px] border border-[#7a7a7a] bg-white" />
          <Btn cls="ml-[9px] h-[24px] w-[73px]">Add Pin</Btn>
          <Btn cls="ml-[8px] h-[24px] w-[73px]" off>Remove Pin</Btn>
        </div>
        <div className="mt-[17px] pl-[1px] leading-[16px]">Swapable Pins:</div>
        <div className="mt-[3px] flex gap-[9px]">
          <div className="flex h-[82px] w-[365px] justify-end border border-[#828790] bg-white">
            <div className="flex w-[17px] flex-col items-center justify-between bg-[#f0f0f0] py-[7px]">
              <svg width="8" height="6" fill="none"><path d="M.5 5L4 1l3.500 4" stroke="#aaa" strokeWidth="1.500" /></svg>
              <svg width="8" height="6" fill="none"><path d="M.5 1L4 5l3.500-4" stroke="#aaa" strokeWidth="1.500" /></svg>
            </div>
          </div>
          <div className="flex flex-col gap-[5px]">
            {["Add", "Remove", "Replace"].map((b) => <Btn key={b} cls="h-[24px] w-[58px]" off>{b}</Btn>)}
          </div>
        </div>
      </div>
      <Preview />
    </div>
    <div className="mt-[7px] ml-[7px] h-[21px] w-[741px] border border-[#a0a0a0] border-r-white border-b-white" />
    <div className="mt-[9px] flex h-[24px] items-center pl-[6px]">
      <Check on />
      <span className="pl-[3px]">Use ARES Libraries</span>
      <div className="mr-[9px] ml-auto flex gap-[10px]">
        <Btn cls="h-[24px] w-[100px]">Help</Btn>
        <Btn cls="h-[24px] w-[100px]" focus>Assign Package(s)</Btn>
        <Btn cls="h-[24px] w-[100px]">Cancel</Btn>
      </div>
    </div>
  </div>
);

/* ---------- window chrome ---------- */
const Atom = ({ s = 18, dark = false }: { s?: number; dark?: boolean }) => (
  <svg width={s} height={s} viewBox="0 0 24 24" fill="none">
    <ellipse cx="12" cy="12" rx="11" ry="4" transform="rotate(38 12 12)" stroke={dark ? "#8a93a6" : "#90a0b8"} strokeWidth="1.100" />
    <ellipse cx="12" cy="12" rx="11" ry="4" transform="rotate(-38 12 12)" stroke={dark ? "#8a93a6" : "#90a0b8"} strokeWidth="1.100" />
    <circle cx="12" cy="12" r={dark ? 4.5 : 6} fill={dark ? "#31589c" : "#16365c"} />
    <circle cx="10.500" cy="10" r="1.800" fill="#7da8dc" />
    <path d="M3 5h2M19 5h2M3 19h2M19 19h2" stroke={dark ? "#d5a23a" : "#666"} strokeWidth="2.500" />
  </svg>
);

const menu: [string, string][] = [["File", "w-[32px]"], ["Edit", "w-[34px]"], ["View", "w-[39px]"], ["Tool", "w-[36px]"], ["Design", "w-[50px]"], ["Graph", "w-[46px]"], ["Debug", "w-[49px]"], ["Library", "w-[50px]"], ["Template", "w-[62px]"], ["System", "w-[52px]"], ["Help", "w-[40px]"]];

const Tabs = () => (
  <div className="h-[35px] bg-gradient-to-r from-[#dfe8f0] to-[#eaf1f9]">
    <div className="flex h-[29px] items-start border-b border-[#6fa5c3] pt-[4px]">
      <div className="relative h-[25px] w-[179px]">
        <svg width="179" height="25" fill="none" className="absolute inset-0">
          <defs><linearGradient id="ta" x2="0" y2="1"><stop stopColor="#e9f4fa" /><stop offset="1" stopColor="#b9d8ea" /></linearGradient></defs>
          <path d="M0 22L21 .5h157.500V25H0z" fill="url(#ta)" />
          <path d="M0 22L21 .5h157.500V25" stroke="#6fa5c3" />
        </svg>
        <div className="relative flex h-[24px] items-center pl-[19px]">
          <Svg><Schem /></Svg>
          <span className="font-['Open_Sans'] text-[12px] font-bold tracking-[-0.4px] whitespace-nowrap text-[#1a4468]">Schematic Capture</span>
          <svg width="13" height="13" fill="none" className="ml-auto mr-[11px] shrink-0"><path d="M1 1l11 11M12 1L1 12" stroke="#555" strokeWidth="1.700" /></svg>
        </div>
      </div>
      <div className="relative h-[24px] w-[130px]">
        <svg width="130" height="24" fill="none" className="absolute inset-0">
          <defs><linearGradient id="tb" x2="0" y2="1"><stop stopColor="#f0f0f0" /><stop offset="1" stopColor="#cdd2d6" /></linearGradient></defs>
          <path d="M0 24V12L12 .5h118V24z" fill="url(#tb)" />
          <path d="M0 12L12 .5h118" stroke="#b5bcc2" />
        </svg>
        <div className="relative flex h-[25px] items-center pl-[10px]">
          <Svg><Chip /></Svg>
          <span className="font-['Open_Sans'] text-[11.500px] tracking-[-0.4px] whitespace-nowrap">PCB Layout</span>
          <svg width="13" height="13" fill="none" className="ml-[8px] shrink-0"><path d="M1 1l11 11M12 1L1 12" stroke="#666" strokeWidth="1.700" /></svg>
        </div>
      </div>
    </div>
    <div className="h-[6px] bg-[#b9d8ea]" />
  </div>
);

const StatusBar = () => (
  <div className="flex h-[27px] items-center bg-gradient-to-b from-[#e8f4fa] via-[#d4e8f3] to-[#afd3e8] text-[11.700px] tracking-[-0.4px]">
    <div className="flex h-full w-[258px] items-center border-r border-[#a5cbe0] pl-[4px]">
      <Grip />
      <svg width="132" height="16" className="ml-[13px]" fill="#0b57c4" stroke="#0a3f94">
        <path d="M5.500 2v12l8-6zM40.500 2v12h2V2zM44.500 2v12l8-6zM78 1.500v13h2.500v-13zM83 1.500v13h2.500v-13zM112 2.500h11v11h-11z" />
      </svg>
      <div className="ml-[8px] h-[18px] w-px bg-[#a9a9a9]" />
      <div className="ml-[13px] h-[13px] w-[13px] shrink-0 rounded-full bg-[#444] text-center font-['Liberation_Serif'] text-[11px] leading-[13px] font-bold text-white">i</div>
      <span className="ml-[6px] tracking-[-0.55px] whitespace-nowrap text-[#8a9299]">No Messages</span>
    </div>
    <div className="ml-[5px] flex h-full w-[412px] items-center border-r border-[#a5cbe0] pl-[3px]">
      <Grip />
      <span className="ml-[8px]">Root sheet 1</span>
    </div>
    <div className="ml-[9px]"><Grip /></div>
  </div>
);

const Cell = ({ children, cls = "" }: Kids & { cls?: string }) => (
  <div className={"flex h-[40px] w-[49px] shrink-0 items-center justify-center " + cls}>{children}</div>
);
const under = "bg-[linear-gradient(#ffd9a6,#ffd9a6)] bg-[length:40px_2px] bg-bottom bg-no-repeat";

const EdgeLogo = () => (
  <svg width="25" height="25" viewBox="0 0 24 24">
    <defs>
      <linearGradient id="eg" x1="0" y1="0" x2="1" y2=".4"><stop stopColor="#1b9de2" /><stop offset=".5" stopColor="#2fc3c4" /><stop offset="1" stopColor="#62d85c" /></linearGradient>
    </defs>
    <path d="M.5 11C1 4.500 6 .5 12 .5S23.500 5 23.500 10c0 3.500-2.500 5.500-5.500 5.500-2.500 0-4-1-4-2 0-.7 1-1 1-3 0-2-2-4-5-4C5.500 6.500 1.500 8 .5 11z" fill="url(#eg)" />
    <path d="M.5 12C1 8.500 4.500 6.500 9 6.500c-3 1-5 4-4.500 8 .5 5 4.500 8.500 9 9C6 24.500 0 19 .5 12z" fill="#1576c9" />
    <path d="M8.500 12c-1 5 3.500 8.500 8.500 7.500 2-.4 3.500-1 4.700-1.700C20 21.500 16.500 23.500 13 23.500 7.500 22.500 5.500 17 8.500 12z" fill="#0d4da4" />
  </svg>
);

const Taskbar = () => (
  <div className="flex h-[40px] items-center bg-gradient-to-r from-[#1a1a1b] via-[#2a1b18] to-[#191919] font-['Open_Sans'] text-white">
    <div className="flex h-full w-[48px] shrink-0 items-center justify-center">
      <svg width="17" height="17" fill="#fff"><path d="M0 2.500l7-1V8H0zM8 1.300L17 0v8H8zM0 9h7v6.500l-7-1zM8 9h9v8l-9-1.300z" /></svg>
    </div>
    <div className="flex h-[40px] w-[344px] shrink-0 items-center border border-[#bdbdbd] bg-[#f2f2f2] pl-[11px] text-[14px] text-[#333]">
      <svg width="18" height="18" fill="none" stroke="#222" strokeWidth="1.300"><circle cx="10.500" cy="6.500" r="5" /><path d="M7 10l-6 6.500" /></svg>
      <span className="ml-[10px] tracking-[0.05px]">Escribe aquí para buscar</span>
    </div>
    <Cell><div className="h-[16px] w-[16px] rounded-full border-2 border-white" /></Cell>
    <Cell cls="pr-[3px]"><svg width="17" height="16" fill="none" stroke="#fff" strokeWidth="1.200"><path d="M1.500 0v2.500h10V0M1.500 5h10v6h-10zM1.500 16v-2.500h10V16M15 0v3M15 8v8" /><path d="M14 5.500h2" strokeWidth="2" /></svg></Cell>
    <Cell><svg width="24" height="26"><path d="M8 9V3h8v6" fill="none" stroke="#fff" strokeWidth="1.500" /><path d="M1 7h22v15a2 2 0 0 1-2 2H3a2 2 0 0 1-2-2z" fill="#f5f5f5" /><path d="M7.500 11h4v4h-4z" fill="#f25022" /><path d="M12.500 11h4v4h-4z" fill="#7fba00" /><path d="M7.500 16h4v4h-4z" fill="#00a4ef" /><path d="M12.500 16h4v4h-4z" fill="#ffb900" /></svg></Cell>
    <Cell><svg width="26" height="24"><path d="M8 1h16v14H8z" fill="#28a8ea" /><path d="M8 8h8v7H8z" fill="#0f64b4" /><path d="M16 8h8v7h-8z" fill="#50d9ff" /><path d="M6 12l9 6 10-6v11H6z" fill="#1490df" /><path d="M25 12v11L13 17z" fill="#1068b8" /><rect x="1" y="6" width="12" height="12" rx="1" fill="#0a62c0" /><circle cx="7" cy="12" r="3" fill="none" stroke="#fff" strokeWidth="1.800" /></svg></Cell>
    <Cell cls={under}><svg width="24" height="22"><path d="M1 1h8l2 3h12v16H1z" fill="#f2b52d" /><path d="M1 5h22v14H1z" fill="#ffd766" /><path d="M5 20v-7q0-2 2-2h10q2 0 2 2v7h-4v-3H9v3z" fill="#3a96e0" /></svg></Cell>
    <Cell><svg width="17" height="22"><path d="M1 1h11l4 4v16H1z" fill="#fafafa" /><path d="M12 1v4h4z" fill="#aaa" /></svg></Cell>
    <Cell cls={under}><EdgeLogo /></Cell>
    <Cell><svg width="24" height="24"><circle cx="11.500" cy="12" r="9" fill="#f4f4f0" stroke="#96b80c" strokeWidth="3.800" /><path d="M9 15L21 3l1.500 1.500L11 16z" fill="#333" /><path d="M17 19l5 3" stroke="#96b80c" strokeWidth="3" /></svg></Cell>
    <Cell cls={under}><div className="h-[25px] w-[25px] bg-[#333c58] text-center text-[12.500px] leading-[11px] font-bold tracking-[-0.8px]"><div className="pt-[3px] text-white">PLC</div><div className="text-[#b5c6ef]">SIM</div></div></Cell>
    <Cell cls={under}><svg width="22" height="22" viewBox="0 0 24 24"><circle cx="12" cy="12" r="12" fill="#fbc116" /><path d="M12 12L1.600 6A12 12 0 0 1 22.400 6z" fill="#e33b2e" /><path d="M12 12L1.600 6A12 12 0 0 0 12 24l5.200-9z" fill="#229b48" /><circle cx="12" cy="12" r="5.500" fill="#fff" /><circle cx="12" cy="12" r="4.300" fill="#3b7ded" /></svg></Cell>
    <Cell cls={under}><svg width="24" height="24" fill="none"><rect x=".5" y=".5" width="23" height="23" fill="#1b3a4c" stroke="#e4eef2" /><path d="M10 3.500h11V10M4 14v6.500h11" stroke="#b4d8de" strokeWidth="3" /><path d="M4 11V4h4M20 13v7h-3" stroke="#1a8a94" strokeWidth="2.500" /><path d="M8 8h8v8H8z" stroke="#22c2cc" strokeWidth="2.200" /></svg></Cell>
    <Cell cls="border-b-2 border-[#ffd9a6] bg-[#484848]"><Atom s={24} dark /></Cell>
    <Cell cls="border-b-2 border-[#ff7800] bg-[#a55a22]"><svg width="22" height="26" fill="none"><path d="M5 3c8-3 13 1 13 7s-5 8-9 5M5 4c-1 4 1 7 4 9" stroke="#dc3c10" strokeWidth="2.800" /><path d="M11 2v15M13 3v13" stroke="#ddd" strokeWidth="1.800" /><circle cx="6" cy="19" r="2.500" stroke="#1c80d8" strokeWidth="2" /><circle cx="13.500" cy="21.500" r="2.500" stroke="#1c80d8" strokeWidth="2" /></svg></Cell>
    <div className="flex h-full flex-1 items-center pl-[60px] text-[11.500px] leading-[17px]">
      <svg width="12" height="8" fill="none" className="shrink-0"><path d="M1 7l5-5.500L11 7" stroke="#fff" strokeWidth="1.300" /></svg>
      <svg width="18" height="16" className="ml-[17px] shrink-0"><path d="M4 11a4 4 0 0 1 0-7 5 5 0 0 1 9 1v6z" fill="#bbb" /><circle cx="12" cy="10.500" r="4.500" fill="#e02030" /><path d="M10.200 8.700l3.600 3.600M13.800 8.700l-3.600 3.600" stroke="#fff" strokeWidth="1.200" /></svg>
      <svg width="14" height="14" fill="none" stroke="#fff" strokeWidth="1.100" className="ml-[17px] shrink-0"><path d="M1 13A12 12 0 0 1 13 1M4.500 13A8.500 8.500 0 0 1 13 4.500M7.500 13A5.500 5.500 0 0 1 13 7.500" /><circle cx="11.500" cy="11.500" r="1" fill="#fff" /></svg>
      <svg width="18" height="17" fill="none" className="ml-[15px] shrink-0"><path d="M2 3l13-1.500v12L2 14z" stroke="#fff" strokeWidth="1.200" /><path d="M6 8c0-3 4-4 5-1M11 9c-1 3-4 3-5 1" stroke="#fff" /><circle cx="13" cy="13" r="3.500" fill="#ff9a0c" /></svg>
      <div className="ml-[12px] w-[24px] text-center text-[11px] tracking-[-0.3px]">ESP<br />ES</div>
      <div className="ml-[8px] w-[66px] text-center text-[11.500px] tracking-[-0.4px] whitespace-nowrap">07:26 p. m.<br />25/03/2021</div>
      <svg width="26" height="26" className="ml-[14px] shrink-0"><path d="M1 3h16v12h-8l-3 3v-3H1z" fill="#fff" /><path d="M4 6.500h10M4 9h10M4 11.500h6" stroke="#222" /><circle cx="16" cy="17" r="7.500" fill="#333" stroke="#999" /><text x="16" y="21" fontSize="11" fill="#fff" textAnchor="middle" fontFamily="Open Sans">2</text></svg>
      <div className="ml-auto h-full w-px shrink-0 bg-[#777]" />
      <div className="w-[4px] shrink-0" />
    </div>
  </div>
);

export default function App() {
  return (
    <div className="relative flex h-[768px] w-[1366px] flex-col overflow-hidden bg-white font-['Liberation_Sans',sans-serif] text-black">
      <div className="flex h-[24px] shrink-0 items-center pl-[1px] font-['Open_Sans'] text-[#8c8c8c]">
        <Atom />
        <span className="ml-[4px] text-[11.500px] tracking-[-0.08px]">Laboratorio3 - Proteus 8 Professional - Schematic Capture</span>
        <svg width="104" height="12" fill="none" stroke="#777" className="mr-[18px] ml-auto mb-[3px]">
          <path d="M0 6.500h10M46.500 3.500h7v7h-7zM48.500 3.500v-2h7v7h-2M92 1l10 10M102 1L92 11" />
        </svg>
      </div>
      <div className="flex h-[17px] shrink-0 items-center pl-[7px] font-['Open_Sans'] text-[11.500px] tracking-[-0.2px] text-[#666]">
        {menu.map(([m, w]) => <span key={m} className={w}>{m}</span>)}
      </div>
      <Toolbar />
      <Tabs />
      <div className="flex h-[597px] shrink-0 bg-[#e1e9f1]">
        <ModeBar />
        <div className="w-[1px]" />
        <RotateBar />
        <DevicePanel />
        <div className="h-full w-[4px] bg-[#b5d0e0]" />
        <Canvas />
        <div className="h-full w-[4px] bg-[#a9cbe0]" />
      </div>
      <StatusBar />
      <Taskbar />
      <Dialog />
    </div>
  );
}
